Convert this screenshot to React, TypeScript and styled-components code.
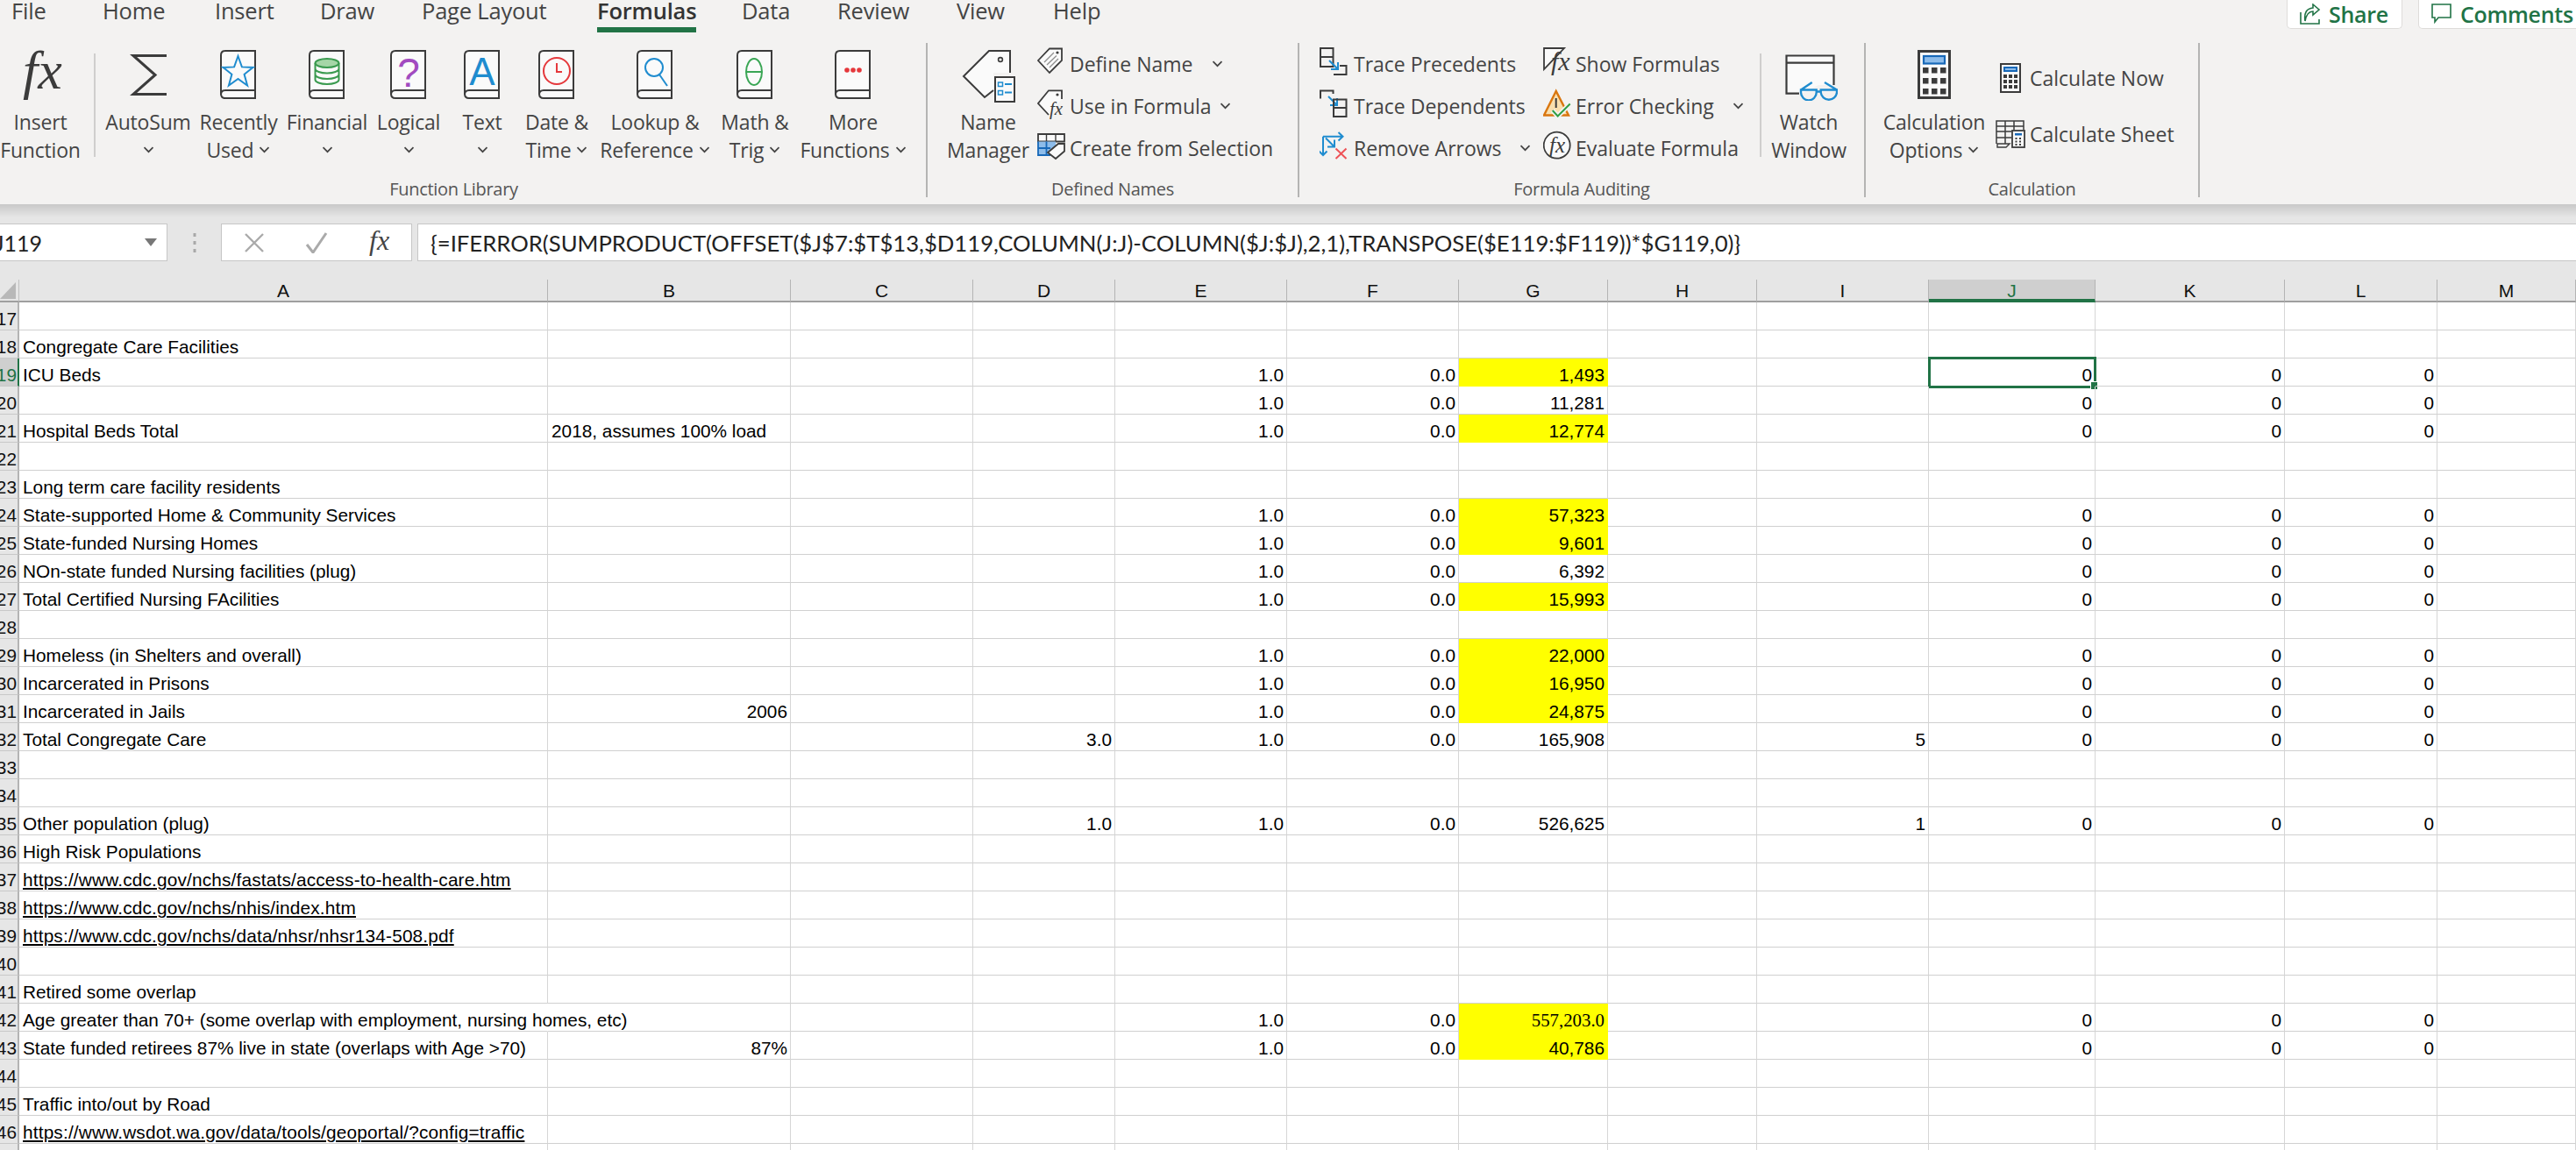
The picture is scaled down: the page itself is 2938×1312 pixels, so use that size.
import React from 'react'
import styled, { createGlobalStyle } from 'styled-components'

const UI_FONT = '"Open Sans", "Noto Sans", sans-serif'
const DARK = '#444444'
const INK = '#3b3b3b'
const BLUE = '#1f8ccf'
const GREEN = '#217346'
const RIBBON = '#f3f2f1'

const GlobalStyle = createGlobalStyle`
  html, body {
    margin: 0;
    padding: 0;
    overflow: hidden;
    background: #ffffff;
  }
`

const Page = styled.div`
  width: 2938px;
  height: 1312px;
  overflow: hidden;
  display: flex;
  flex-direction: column;
  font-family: ${UI_FONT};
  color: ${DARK};
`

/* ---------- ribbon ---------- */

const RibbonWrap = styled.div`
  height: 233px;
  flex: none;
  background: ${RIBBON};
  display: flex;
  flex-direction: column;
`

const TabBar = styled.div`
  height: 49px;
  flex: none;
  display: flex;
  padding-left: 13px;
`

const Tab = styled.div<{ $width: number; $active?: boolean }>`
  width: ${p => p.$width}px;
  flex: none;
  font-size: 25.5px;
  line-height: 25px;
  letter-spacing: -0.2px;
  font-weight: ${p => (p.$active ? 600 : 400)};
  color: ${p => (p.$active ? '#333333' : DARK)};

  span {
    display: inline-block;
    height: 31px;
    border-bottom: ${p => (p.$active ? `6px solid ${GREEN}` : 'none')};
  }
`

const TabActions = styled.div`
  margin-left: auto;
  display: flex;
  gap: 18px;
  align-items: flex-start;
  margin-right: -20px;
`

const TabAction = styled.div<{ $width: number }>`
  width: ${p => p.$width}px;
  height: 33px;
  box-sizing: border-box;
  background: #ffffff;
  border: 1px solid #dedcda;
  border-top: none;
  border-radius: 0 0 5px 5px;
  display: flex;
  align-items: center;
  gap: 9px;
  padding-left: 14px;
  color: ${GREEN};
  font-size: 25px;
  font-weight: 600;
  letter-spacing: -0.3px;
`

const GroupRow = styled.div`
  display: flex;
  height: 176px;
  margin-left: -21px;
`

const Group = styled.div<{ $width: number }>`
  width: ${p => p.$width}px;
  flex: none;
  box-sizing: border-box;
  border-right: 2px solid #b4b4b3;
  display: flex;
  flex-direction: column;
`

const GroupBody = styled.div<{ $pad?: number }>`
  height: 151px;
  flex: none;
  display: flex;
  padding-left: ${p => p.$pad ?? 0}px;
`

const GroupLabel = styled.div`
  flex: 1;
  text-align: center;
  font-size: 20px;
  line-height: 24px;
  padding-top: 4px;
  letter-spacing: -0.3px;
  color: #555555;
`

const LargeButton = styled.div<{ $width: number }>`
  width: ${p => p.$width}px;
  flex: none;
  display: flex;
  flex-direction: column;
  align-items: center;
`

const Divider = styled.div`
  width: 2px;
  height: 118px;
  margin: 12px 6px 0 15px;
  flex: none;
  background: #cfcecd;
`

const IconSlot = styled.div`
  height: 74px;
  flex: none;
  box-sizing: border-box;
  padding-top: 8px;
`

const LargeLabel = styled.div`
  font-size: 23px;
  line-height: 32px;
  letter-spacing: -0.2px;
  height: 32px;
  white-space: nowrap;
  display: flex;
  align-items: center;
  gap: 6px;
`

const SmallColumn = styled.div<{ $width?: number; $top?: number; $rowHeight?: number }>`
  width: ${p => (p.$width ? `${p.$width}px` : 'auto')};
  flex: none;
  display: flex;
  flex-direction: column;
  padding-top: ${p => p.$top ?? 0}px;

  & > div {
    height: ${p => p.$rowHeight ?? 48}px;
  }
`

const SmallRow = styled.div<{ $iconWidth?: number; $gap?: number }>`
  display: flex;
  align-items: center;
  gap: ${p => p.$gap ?? 5}px;
  font-size: 23px;
  white-space: nowrap;

  & > svg:first-child {
    width: ${p => p.$iconWidth ?? 32}px;
    flex: none;
  }
`

const CaretBox = styled.span<{ $gap: number }>`
  display: inline-flex;
  margin-left: ${p => p.$gap}px;
`

const Caret = ({ gap }: { gap?: number }) => {
  const icon = (
    <svg width="13" height="8" viewBox="0 0 13 8">
      <path d="M1.5 1.2 6.5 6.2l5-5" fill="none" stroke={DARK} strokeWidth="1.7" />
    </svg>
  )
  return gap === undefined ? icon : <CaretBox $gap={gap}>{icon}</CaretBox>
}

/* ---------- icons ---------- */

const InsertFunctionIcon = () => (
  <svg width="56" height="58" viewBox="0 0 56 58">
    <text x="8" y="44" fontFamily="Liberation Serif" fontStyle="italic" fontSize="62" fill={INK}>
      fx
    </text>
  </svg>
)

const SigmaIcon = () => (
  <svg width="42" height="56" viewBox="0 0 42 56">
    <path d="M42 6.5H4l25 22-25 22h38" fill="none" stroke={INK} strokeWidth="3" />
  </svg>
)

const Book = ({ children }: { children: React.ReactNode }) => (
  <svg width="42" height="56" viewBox="0 0 42 56">
    <path d="M6 1h34v54H6q-5 0-5-5V6q0-5 5-5z" fill="#fafafa" stroke={INK} strokeWidth="2" />
    <path d="M1 51q0-5 5-5h34" fill="none" stroke={INK} strokeWidth="2" />
    {children}
  </svg>
)

const NameManagerIcon = () => (
  <svg width="62" height="60" viewBox="0 0 62 60">
    <path d="M56 26V1H32L3 30l24 24 10-8V26z" fill="#fafafa" />
    <path d="M56 26V1H32L3 30l24 24 10-8" fill="none" stroke={INK} strokeWidth="2" />
    <circle cx="45" cy="11" r="2.4" fill="none" stroke={INK} strokeWidth="1.6" />
    <rect x="39" y="31" width="22" height="28" fill="#fafafa" stroke={INK} strokeWidth="2" />
    <rect x="42.5" y="37" width="5" height="4.5" fill="none" stroke={BLUE} strokeWidth="1.5" />
    <rect x="42.5" y="46.5" width="5" height="4.5" fill="none" stroke={BLUE} strokeWidth="1.5" />
    <path d="M50 39h8M50 48.5h8" stroke={BLUE} strokeWidth="1.8" />
  </svg>
)

const DefineNameIcon = () => (
  <svg height="40" viewBox="0 0 32 40">
    <path d="M1 16 14 2.5h14V16L14 30z" fill="#fafafa" stroke={INK} strokeWidth="1.8" />
    <path d="M8 18 19 7M11 21 22 10.5M14 24 24 14" stroke="#8f8f8f" strokeWidth="1.3" />
    <circle cx="23" cy="7" r="1.6" fill={INK} />
  </svg>
)

const UseInFormulaIcon = () => (
  <svg height="40" viewBox="0 0 32 40">
    <path d="M28 12V2.3H13L1 17l12 13" fill="#fafafa" stroke={INK} strokeWidth="1.8" />
    <circle cx="23" cy="7" r="1.6" fill={INK} />
    <text x="14" y="30" fontFamily="Liberation Serif" fontStyle="italic" fontSize="21" fill={INK}>
      fx
    </text>
  </svg>
)

const CreateSelectionIcon = () => (
  <svg height="40" viewBox="0 0 32 40">
    <path d="M1 4h30v8.5H1z" fill="#fafafa" stroke={INK} strokeWidth="1.8" />
    <path d="M10.5 4v8M21 4v8" stroke={INK} strokeWidth="1.4" />
    <path d="M1 12.5h20V28H1z" fill="#8dbcea" />
    <path d="M1 12.5V28h14M1 20h14M10.5 12.5V28" fill="none" stroke="#1768b8" strokeWidth="1.8" />
    <path d="M12 25l12-10h7v8.5L21 32z" fill="#fafafa" stroke={INK} strokeWidth="1.8" />
  </svg>
)

const TracePrecedentsIcon = () => (
  <svg height="40" viewBox="0 0 32 40">
    <path d="M1 2h14.5v21H1zM1 12h14.5" fill="none" stroke={INK} strokeWidth="2" />
    <path d="M11 16l10 10M21 18v8h-8" fill="none" stroke={BLUE} strokeWidth="2" />
    <path d="M16 32h14.5V22H23" fill="none" stroke={INK} strokeWidth="2" />
  </svg>
)

const TraceDependentsIcon = () => (
  <svg height="40" viewBox="0 0 32 40">
    <path d="M1 11.5V2.5h14.5V6" fill="none" stroke={INK} strokeWidth="2" />
    <path d="M10 9l10 10M20 11v8h-8" fill="none" stroke={BLUE} strokeWidth="2" />
    <path d="M16 12.5h14.5V32H16zM16 22h14.5" fill="none" stroke={INK} strokeWidth="2" />
  </svg>
)

const RemoveArrowsIcon = () => (
  <svg height="40" viewBox="0 0 32 40">
    <path d="M4 6.7h22M21.5 2l5 4.7-5 4.7M4 6.7V28M-.5 23.5 4 28l4.500-4.500M7 8.500l10 10M17 10.500v8H9" fill="none" stroke={BLUE} strokeWidth="2" />
    <path d="M18.500 20.500l12 11.500M30.500 20.500 18.500 32" stroke="#ee5156" strokeWidth="2" />
  </svg>
)

const ShowFormulasIcon = () => (
  <svg height="40" viewBox="0 0 32 40">
    <path d="M1 2h23L1 26z" fill="#fafafa" stroke={INK} strokeWidth="1.8" />
    <text x="9" y="27" fontFamily="Liberation Serif" fontStyle="italic" fontSize="30" fill={INK}>
      fx
    </text>
  </svg>
)

const ErrorCheckingIcon = () => (
  <svg height="40" viewBox="0 0 32 40">
    <path d="M14.700 3 1 30.500h28z" fill="#f9dfae" stroke="#d9760f" strokeWidth="2.4" />
    <path d="M14.700 11v11" stroke={INK} strokeWidth="2" />
    <path d="M10.700 25l6 6.500 14-14" fill="none" stroke={RIBBON} strokeWidth="5.500" />
    <path d="M10.700 25l6 6.500 14-14" fill="none" stroke="#2f9e44" strokeWidth="2" />
  </svg>
)

const EvaluateIcon = () => (
  <svg height="40" viewBox="0 0 32 40">
    <circle cx="15.700" cy="16.700" r="15" fill="#fafafa" stroke={INK} strokeWidth="1.8" />
    <text x="7" y="25" fontFamily="Liberation Serif" fontStyle="italic" fontSize="25" fill={INK}>
      fx
    </text>
  </svg>
)

const WatchIcon = () => (
  <svg width="66" height="58" viewBox="0 0 66 58">
    <path d="M7 6.500h55V40H44L24 50H7z" fill="#fafafa" />
    <path d="M22 49.700H7.500V6.500h54V40M7.500 14.700h54" fill="none" stroke={INK} strokeWidth="2.200" />
    <path d="M24 45.500 36.700 37M51 37l14 8.500M24 45.500h17.700v3a8.800 8.800 0 0 1-17.700 0zM46.700 45.500H65v3a9.200 9.200 0 0 1-18.300 0zM41.700 47.500h5" fill="none" stroke={BLUE} strokeWidth="2.400" />
  </svg>
)

const CalcKeys = ({ x, y, size, stepX, stepY }: { x: number; y: number; size: number; stepX: number; stepY: number }) => (
  <g fill={INK}>
    {[0, 1, 2].flatMap(r =>
      [0, 1, 2].map(c => <rect key={`${r}${c}`} x={x + c * stepX} y={y + r * stepY} width={size} height={size} />),
    )}
  </g>
)

const CalcLargeIcon = () => (
  <svg width="40" height="56" viewBox="0 0 40 56">
    <rect x="2.500" y="1.500" width="35" height="53" fill="#fafafa" stroke={INK} strokeWidth="3" />
    <rect x="8" y="7" width="24" height="8.500" fill="#8dbcea" stroke="#1768b8" strokeWidth="2.200" />
    <CalcKeys x={7} y={20} size={6.5} stepX={10} stepY={12} />
  </svg>
)

const CalcNowIcon = () => (
  <svg height="34" viewBox="0 0 26 34">
    <rect x="2" y="1" width="22" height="32" fill="#fafafa" stroke={INK} strokeWidth="2" />
    <rect x="5" y="4" width="16" height="6" fill="#1768b8" />
    <rect x="7" y="6" width="12" height="2" fill="#8dbcea" />
    <CalcKeys x={5} y={13} size={4} stepX={6} stepY={6} />
  </svg>
)

const CalcSheetIcon = () => (
  <svg height="32" viewBox="0 0 34 32">
    <path d="M1 27V1h31v10M1 7h31M1 13h17M1 20h17M11 1v26M21 1v10" fill="none" stroke={INK} strokeWidth="1.500" />
    <rect x="19" y="12" width="14" height="19" fill="#fafafa" stroke={INK} strokeWidth="1.800" />
    <rect x="22" y="15" width="8" height="2.500" fill="#1768b8" />
    <path d="M22.500 21h2M27 21h2M22.500 24.500h2M27 24.500h2M22.500 28h2M27 28h2" stroke={INK} strokeWidth="1.800" />
    <path d="M2 27h14l-4 4H2z" fill="none" stroke={INK} strokeWidth="1.400" />
  </svg>
)

const ShareIcon = () => (
  <svg width="24" height="24" viewBox="0 0 24 24">
    <path d="M1 10v13h21v-5" fill="none" stroke={GREEN} strokeWidth="1.600" />
    <path d="M15 1l7 6-7 6V9q-7 0-9 11-2-14 9-15z" fill="none" stroke={GREEN} strokeWidth="1.600" />
  </svg>
)

const CommentIcon = () => (
  <svg width="24" height="24" viewBox="0 0 24 24">
    <path d="M1 1h21v15H8l-4 5v-5H1z" fill="none" stroke={GREEN} strokeWidth="1.600" />
  </svg>
)

/* ---------- formula bar ---------- */

const FormulaArea = styled.div`
  height: 86px;
  flex: none;
  box-sizing: border-box;
  padding-top: 22px;
  background: linear-gradient(#c8c8c8 0, #e6e6e6 15px);
  display: flex;
  align-items: flex-start;
`

const NameBox = styled.div`
  width: 191px;
  height: 43px;
  flex: none;
  box-sizing: border-box;
  background: #ffffff;
  border: 1px solid #c6c6c6;
  border-left: none;
  display: flex;
  align-items: center;
  padding-right: 11px;
  font-family: 'Lato', sans-serif;
  font-size: 25px;
  color: #222222;

  span {
    margin-left: -6px;
    flex: 1;
  }
`

const NameArrow = styled.i`
  width: 0;
  height: 0;
  border-left: 7px solid transparent;
  border-right: 7px solid transparent;
  border-top: 9px solid #777777;
`

const BarGrip = styled.div`
  width: 61px;
  height: 43px;
  flex: none;
  display: flex;
  align-items: center;
  justify-content: center;

  svg {
    display: block;
  }
`

const FxBox = styled.div`
  width: 218px;
  height: 43px;
  flex: none;
  box-sizing: border-box;
  background: #ffffff;
  border: 1px solid #c6c6c6;
  display: flex;
  align-items: center;
  padding-left: 25px;
  gap: 46px;
`

const FormulaInput = styled.div`
  flex: 1;
  height: 43px;
  margin-left: 6px;
  box-sizing: border-box;
  background: #ffffff;
  border: 1px solid #c6c6c6;
  border-right: none;
  display: flex;
  align-items: center;
  padding-left: 14px;
  font-family: 'Lato', sans-serif;
  font-size: 25.7px;
  color: #222222;
  white-space: nowrap;
`

/* ---------- sheet ---------- */

const COLUMNS: [string, number][] = [
  ['A', 603],
  ['B', 277],
  ['C', 208],
  ['D', 162],
  ['E', 196],
  ['F', 196],
  ['G', 170],
  ['H', 170],
  ['I', 196],
  ['J', 190],
  ['K', 216],
  ['L', 174],
  ['M', 158],
]

const Sheet = styled.div`
  flex: 1;
  overflow: hidden;
  display: grid;
  grid-template-columns: 22px ${COLUMNS.map(c => `${c[1]}px`).join(' ')};
  grid-template-rows: 26px;
  grid-auto-rows: 32px;
  background: #ffffff;
  font-family: 'Liberation Sans', Arial, sans-serif;
  font-size: 20.8px;
  color: #000000;
`

const Corner = styled.div`
  background: #e6e6e6;
  border-bottom: 2px solid #9f9f9f;
  border-right: 1px solid #c0c0c0;
  box-sizing: border-box;
  display: flex;
  align-items: flex-end;
  justify-content: flex-end;
  padding: 0 3px 2px 0;

  i {
    width: 19px;
    height: 19px;
    background: #b8b8b8;
    clip-path: polygon(100% 0, 100% 100%, 0 100%);
  }
`

const ColHead = styled.div<{ $active?: boolean }>`
  box-sizing: border-box;
  background: ${p => (p.$active ? '#cfcfcf' : '#e6e6e6')};
  color: ${p => (p.$active ? GREEN : '#111111')};
  border-right: 1px solid #b4b4b4;
  border-bottom: ${p => (p.$active ? `4px solid ${GREEN}` : '2px solid #9f9f9f')};
  display: flex;
  align-items: center;
  justify-content: center;
  font-size: 21px;
  padding-top: ${p => (p.$active ? 4 : 2)}px;
`

const RowHead = styled.div<{ $active?: boolean }>`
  box-sizing: border-box;
  overflow: hidden;
  background: ${p => (p.$active ? '#cfcfcf' : '#e6e6e6')};
  color: ${p => (p.$active ? GREEN : '#111111')};
  border-right: ${p => (p.$active ? `2px solid ${GREEN}` : '2px solid #b4b4b4')};
  border-bottom: 1px solid #c8c8c8;
  display: flex;
  justify-content: flex-end;
  align-items: flex-end;
  padding: 0 1px 0 0;
  white-space: nowrap;
`

const Cell = styled.div<{ $right?: boolean; $fill?: boolean; $spill?: boolean; $link?: boolean; $serif?: boolean }>`
  position: relative;
  box-sizing: border-box;
  display: flex;
  align-items: flex-end;
  justify-content: ${p => (p.$right ? 'flex-end' : 'flex-start')};
  padding: 0 ${p => (p.$right ? 3 : 0)}px 0 ${p => (p.$right ? 0 : 4)}px;
  white-space: nowrap;
  background: ${p => (p.$fill ? '#ffff00' : 'transparent')};
  border-right: 1px solid ${p => (p.$fill ? '#ffff00' : p.$spill ? 'transparent' : '#d6d6d6')};
  border-bottom: 1px solid ${p => (p.$fill ? '#ffff00' : '#d0d0d0')};
  text-decoration: ${p => (p.$link ? 'underline' : 'none')};
  text-decoration-thickness: 2px;
  text-underline-offset: 2px;
  letter-spacing: ${p => (p.$link ? '0.17px' : 'normal')};
  font-family: ${p => (p.$serif ? "'Liberation Serif', serif" : 'inherit')};
`

const Selection = styled.div`
  position: absolute;
  left: -1px;
  right: -2px;
  top: -2px;
  bottom: -3px;
  border: 3px solid ${GREEN};
  pointer-events: none;

  i {
    position: absolute;
    right: -5px;
    bottom: -5px;
    width: 7px;
    height: 8px;
    background: ${GREEN};
    border: 1px solid #ffffff;
  }
`

type Row = {
  n: number
  cells?: Record<string, string>
  fill?: boolean
  link?: boolean
}

const nums = (g: string, extra?: Record<string, string>) => ({
  E: '1.0',
  F: '0.0',
  G: g,
  J: '0',
  K: '0',
  L: '0',
  ...extra,
})

const ROWS: Row[] = [
  { n: 117 },
  { n: 118, cells: { A: 'Congregate Care Facilities' } },
  { n: 119, cells: nums('1,493', { A: 'ICU Beds' }), fill: true },
  { n: 120, cells: nums('11,281') },
  { n: 121, cells: nums('12,774', { A: 'Hospital Beds Total', B: '2018, assumes 100% load' }), fill: true },
  { n: 122 },
  { n: 123, cells: { A: 'Long term care facility residents' } },
  { n: 124, cells: nums('57,323', { A: 'State-supported Home & Community Services' }), fill: true },
  { n: 125, cells: nums('9,601', { A: 'State-funded Nursing Homes' }), fill: true },
  { n: 126, cells: nums('6,392', { A: 'NOn-state funded Nursing facilities (plug)' }) },
  { n: 127, cells: nums('15,993', { A: 'Total Certified Nursing FAcilities' }), fill: true },
  { n: 128 },
  { n: 129, cells: nums('22,000', { A: 'Homeless (in Shelters and overall)' }), fill: true },
  { n: 130, cells: nums('16,950', { A: 'Incarcerated in Prisons' }), fill: true },
  { n: 131, cells: nums('24,875', { A: 'Incarcerated in Jails', B: '2006' }), fill: true },
  { n: 132, cells: nums('165,908', { A: 'Total Congregate Care', D: '3.0', I: '5' }) },
  { n: 133 },
  { n: 134 },
  { n: 135, cells: nums('526,625', { A: 'Other population (plug)', D: '1.0', I: '1' }) },
  { n: 136, cells: { A: 'High Risk Populations' } },
  { n: 137, cells: { A: 'https://www.cdc.gov/nchs/fastats/access-to-health-care.htm' }, link: true },
  { n: 138, cells: { A: 'https://www.cdc.gov/nchs/nhis/index.htm' }, link: true },
  { n: 139, cells: { A: 'https://www.cdc.gov/nchs/data/nhsr/nhsr134-508.pdf' }, link: true },
  { n: 140 },
  { n: 141, cells: { A: 'Retired some overlap' } },
  { n: 142, cells: nums('557,203.0', { A: 'Age greater than 70+ (some overlap with employment, nursing homes, etc)' }), fill: true },
  { n: 143, cells: nums('40,786', { A: 'State funded retirees 87% live in state (overlaps with Age >70)', B: '87%' }), fill: true },
  { n: 144 },
  { n: 145, cells: { A: 'Traffic into/out by Road' } },
  { n: 146, cells: { A: 'https://www.wsdot.wa.gov/data/tools/geoportal/?config=traffic' }, link: true },
  { n: 147 },
]

const LEFT_TEXT = (col: string, text: string) => col === 'A' || text.startsWith('2018')

const SheetRow = ({ row }: { row: Row }) => (
  <>
    <RowHead $active={row.n === 119}>{row.n}</RowHead>
    {COLUMNS.map(([col]) => {
      const text = row.cells?.[col] ?? ''
      const selected = row.n === 119 && col === 'J'
      return (
        <Cell
          key={col}
          $right={!!text && !LEFT_TEXT(col, text)}
          $fill={col === 'G' && row.fill}
          $spill={col === 'A' && row.n === 142}
          $link={col === 'A' && row.link}
          $serif={col === 'G' && row.n === 142}
        >
          {text}
          {selected && (
            <Selection>
              <i />
            </Selection>
          )}
        </Cell>
      )
    })}
  </>
)

const Big = ({ width, icon, lines, caret }: { width: number; icon: React.ReactNode; lines: string[]; caret?: boolean }) => (
  <LargeButton $width={width}>
    <IconSlot>{icon}</IconSlot>
    <LargeLabel>{lines[0]}</LargeLabel>
    <LargeLabel>
      {lines[1]}
      {caret && <Caret />}
    </LargeLabel>
  </LargeButton>
)

const iconFont = { fontFamily: 'Liberation Sans' }

const App = () => (
  <Page>
    <GlobalStyle />
    <RibbonWrap>
      <TabBar>
        <Tab $width={104}>File</Tab>
        <Tab $width={128}>Home</Tab>
        <Tab $width={120}>Insert</Tab>
        <Tab $width={116}>Draw</Tab>
        <Tab $width={200}>Page Layout</Tab>
        <Tab $width={165} $active>
          <span>Formulas</span>
        </Tab>
        <Tab $width={109}>Data</Tab>
        <Tab $width={136}>Review</Tab>
        <Tab $width={110}>View</Tab>
        <Tab $width={100}>Help</Tab>
        <TabActions>
          <TabAction $width={132}>
            <ShareIcon />
            Share
          </TabAction>
          <TabAction $width={200}>
            <CommentIcon />
            Comments
          </TabAction>
        </TabActions>
      </TabBar>
      <GroupRow>
        <Group $width={1079}>
          <GroupBody $pad={21}>
            <Big width={92} icon={<InsertFunctionIcon />} lines={['Insert', 'Function']} />
            <Divider />
            <Big width={108} icon={<SigmaIcon />} lines={['AutoSum', '']} caret />
            <Big
              width={98}
              icon={
                <Book>
                  <path d="M20.5 7 24.9 19.400 37.6 19.900 27.6 27.800 31.100 40.500 20.5 33 9.900 40.500 13.400 27.800 3.400 19.900 16.100 19.400z" fill="none" stroke={BLUE} strokeWidth="2" />
                </Book>
              }
              lines={['Recently', 'Used']}
              caret
            />
            <Big
              width={104}
              icon={
                <Book>
                  <g fill="none" stroke="#3a9a4f" strokeWidth="2">
                    <ellipse cx="21" cy="15" rx="13.500" ry="5" fill="#a5d6a7" />
                    <path d="M7.500 15v19a13.500 5 0 0 0 27 0V15M7.500 21.500a13.500 5 0 0 0 27 0M7.500 28a13.500 5 0 0 0 27 0" />
                  </g>
                </Book>
              }
              lines={['Financial', '']}
              caret
            />
            <Big
              width={82}
              icon={
                <Book>
                  <text x="21" y="42" textAnchor="middle" fontSize="46" fill="#a24bc0" style={iconFont}>
                    ?
                  </text>
                </Book>
              }
              lines={['Logical', '']}
              caret
            />
            <Big
              width={86}
              icon={
                <Book>
                  <text x="21" y="40" textAnchor="middle" fontSize="44" fill={BLUE} style={iconFont}>
                    A
                  </text>
                </Book>
              }
              lines={['Text', '']}
              caret
            />
            <Big
              width={84}
              icon={
                <Book>
                  <circle cx="21" cy="24" r="15" fill="none" stroke="#e5383c" strokeWidth="2" />
                  <path d="M21 15v10h6" fill="none" stroke="#e5383c" strokeWidth="2" />
                </Book>
              }
              lines={['Date &', 'Time']}
              caret
            />
            <Big
              width={140}
              icon={
                <Book>
                  <circle cx="20" cy="20" r="10" fill="none" stroke={BLUE} strokeWidth="2" />
                  <path d="M26 28l9 13" stroke={BLUE} strokeWidth="2" />
                </Book>
              }
              lines={['Lookup &', 'Reference']}
              caret
            />
            <Big
              width={88}
              icon={
                <Book>
                  <ellipse cx="20" cy="25" rx="9" ry="15" fill="none" stroke="#3aa655" strokeWidth="2" />
                  <path d="M11 25h18" stroke="#3aa655" strokeWidth="2" />
                </Book>
              }
              lines={['Math &', 'Trig']}
              caret
            />
            <Big
              width={136}
              icon={
                <Book>
                  <g fill="#e5383c">
                    <circle cx="14" cy="23" r="2.800" />
                    <circle cx="21" cy="23" r="2.800" />
                    <circle cx="28" cy="23" r="2.800" />
                  </g>
                </Book>
              }
              lines={['More', 'Functions']}
              caret
            />
          </GroupBody>
          <GroupLabel>Function Library</GroupLabel>
        </Group>

        <Group $width={424}>
          <GroupBody $pad={13}>
            <Big width={112} icon={<NameManagerIcon />} lines={['Name', 'Manager']} />
            <SmallColumn>
              <SmallRow>
                <DefineNameIcon />
                Define Name
                <Caret gap={17} />
              </SmallRow>
              <SmallRow>
                <UseInFormulaIcon />
                Use in Formula
                <Caret gap={4} />
              </SmallRow>
              <SmallRow>
                <CreateSelectionIcon />
                Create from Selection
              </SmallRow>
            </SmallColumn>
          </GroupBody>
          <GroupLabel>Defined Names</GroupLabel>
        </Group>

        <Group $width={646}>
          <GroupBody $pad={23}>
            <SmallColumn $width={255}>
              <SmallRow $gap={7}>
                <TracePrecedentsIcon />
                Trace Precedents
              </SmallRow>
              <SmallRow $gap={7}>
                <TraceDependentsIcon />
                Trace Dependents
              </SmallRow>
              <SmallRow $gap={7}>
                <RemoveArrowsIcon />
                Remove Arrows
                <Caret gap={13} />
              </SmallRow>
            </SmallColumn>
            <SmallColumn $width={232}>
              <SmallRow>
                <ShowFormulasIcon />
                Show Formulas
              </SmallRow>
              <SmallRow>
                <ErrorCheckingIcon />
                Error Checking
                <Caret gap={16} />
              </SmallRow>
              <SmallRow>
                <EvaluateIcon />
                Evaluate Formula
              </SmallRow>
            </SmallColumn>
            <Divider />
            <Big width={96} icon={<WatchIcon />} lines={['Watch', 'Window']} />
          </GroupBody>
          <GroupLabel>Formula Auditing</GroupLabel>
        </Group>

        <Group $width={381}>
          <GroupBody $pad={8}>
            <Big width={140} icon={<CalcLargeIcon />} lines={['Calculation', 'Options']} caret />
            <SmallColumn $top={8} $rowHeight={64}>
              <SmallRow $iconWidth={34}>
                <CalcNowIcon />
                Calculate Now
              </SmallRow>
              <SmallRow $iconWidth={34}>
                <CalcSheetIcon />
                Calculate Sheet
              </SmallRow>
            </SmallColumn>
          </GroupBody>
          <GroupLabel>Calculation</GroupLabel>
        </Group>
      </GroupRow>
    </RibbonWrap>

    <FormulaArea>
      <NameBox>
        <span>J119</span>
        <NameArrow />
      </NameBox>
      <BarGrip>
        <svg width="4" height="22" viewBox="0 0 4 22">
          <path d="M2 0v4M2 9v4M2 18v4" stroke="#a8a8a8" strokeWidth="3" />
        </svg>
      </BarGrip>
      <FxBox>
        <svg width="24" height="24" viewBox="0 0 24 24">
          <path d="M2 2l20 20M22 2 2 22" stroke="#aaaaaa" strokeWidth="2.400" />
        </svg>
        <svg width="26" height="24" viewBox="0 0 26 24">
          <path d="M2 14l7 9L24 1" fill="none" stroke="#aaaaaa" strokeWidth="3" />
        </svg>
        <svg width="30" height="32" viewBox="0 0 30 32">
          <text x="1" y="24" fontFamily="Liberation Serif" fontStyle="italic" fontSize="32" fill={DARK}>
            fx
          </text>
        </svg>
      </FxBox>
      <FormulaInput>{'{=IFERROR(SUMPRODUCT(OFFSET($J$7:$T$13,$D119,COLUMN(J:J)-COLUMN($J:$J),2,1),TRANSPOSE($E119:$F119))*$G119,0)}'}</FormulaInput>
    </FormulaArea>

    <Sheet>
      <Corner>
        <i />
      </Corner>
      {COLUMNS.map(([col]) => (
        <ColHead key={col} $active={col === 'J'}>
          {col}
        </ColHead>
      ))}
      {ROWS.map(row => (
        <SheetRow key={row.n} row={row} />
      ))}
    </Sheet>
  </Page>
)

export default App
